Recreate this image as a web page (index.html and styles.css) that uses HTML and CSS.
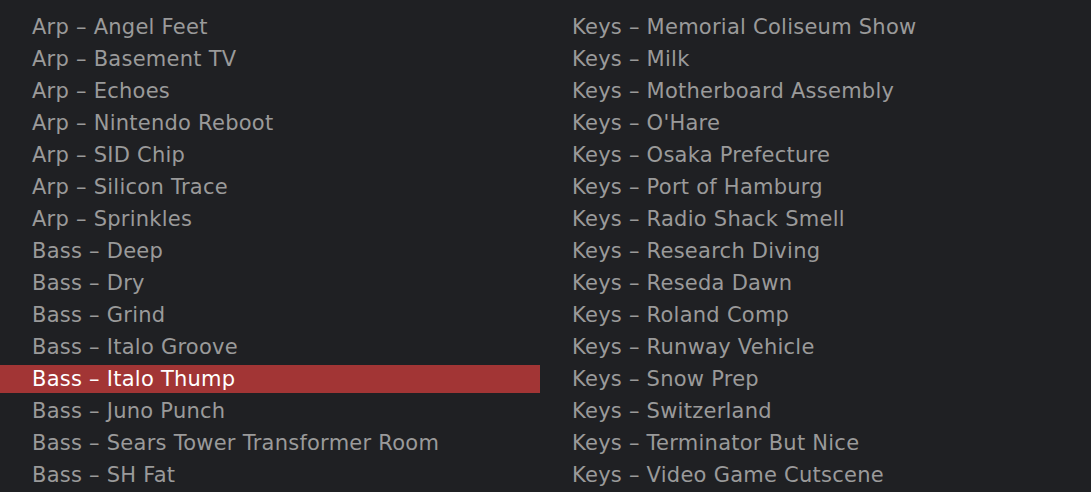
FILE: index.html
```html
<!DOCTYPE html>
<html>
<head>
<meta charset="utf-8">
<link rel="stylesheet" href="styles.css">
</head>
<body>
<div class="list">
  <ul class="col">
    <li class="item">Arp – Angel Feet</li>
    <li class="item">Arp – Basement TV</li>
    <li class="item">Arp – Echoes</li>
    <li class="item">Arp – Nintendo Reboot</li>
    <li class="item">Arp – SID Chip</li>
    <li class="item">Arp – Silicon Trace</li>
    <li class="item">Arp – Sprinkles</li>
    <li class="item">Bass – Deep</li>
    <li class="item">Bass – Dry</li>
    <li class="item">Bass – Grind</li>
    <li class="item">Bass – Italo Groove</li>
    <li class="item selected">Bass – Italo Thump</li>
    <li class="item">Bass – Juno Punch</li>
    <li class="item">Bass – Sears Tower Transformer Room</li>
    <li class="item">Bass – SH Fat</li>
  </ul>
  <ul class="col">
    <li class="item">Keys – Memorial Coliseum Show</li>
    <li class="item">Keys – Milk</li>
    <li class="item">Keys – Motherboard Assembly</li>
    <li class="item">Keys – O'Hare</li>
    <li class="item">Keys – Osaka Prefecture</li>
    <li class="item">Keys – Port of Hamburg</li>
    <li class="item">Keys – Radio Shack Smell</li>
    <li class="item">Keys – Research Diving</li>
    <li class="item">Keys – Reseda Dawn</li>
    <li class="item">Keys – Roland Comp</li>
    <li class="item">Keys – Runway Vehicle</li>
    <li class="item">Keys – Snow Prep</li>
    <li class="item">Keys – Switzerland</li>
    <li class="item">Keys – Terminator But Nice</li>
    <li class="item">Keys – Video Game Cutscene</li>
  </ul>
</div>
</body>
</html>
```
FILE: styles.css
```css
html, body {
  margin: 0;
  padding: 0;
  background: #1f2023;
  height: 100%;
  overflow: hidden;
}
.list {
  display: grid;
  grid-template-columns: 540px 540px;
  padding-top: 11px;
  font-family: "DejaVu Sans", sans-serif;
  font-size: 21px;
  letter-spacing: 0.25px;
  color: #9a9a9a;
}
.col {
  list-style: none;
  margin: 0;
  padding: 0;
  display: flex;
  flex-direction: column;
}
.item {
  height: 28px;
  margin: 2px 0;
  line-height: 28px;
  padding-left: 32px;
  white-space: nowrap;
}
.selected {
  background: #a23535;
  color: #ffffff;
}
```
